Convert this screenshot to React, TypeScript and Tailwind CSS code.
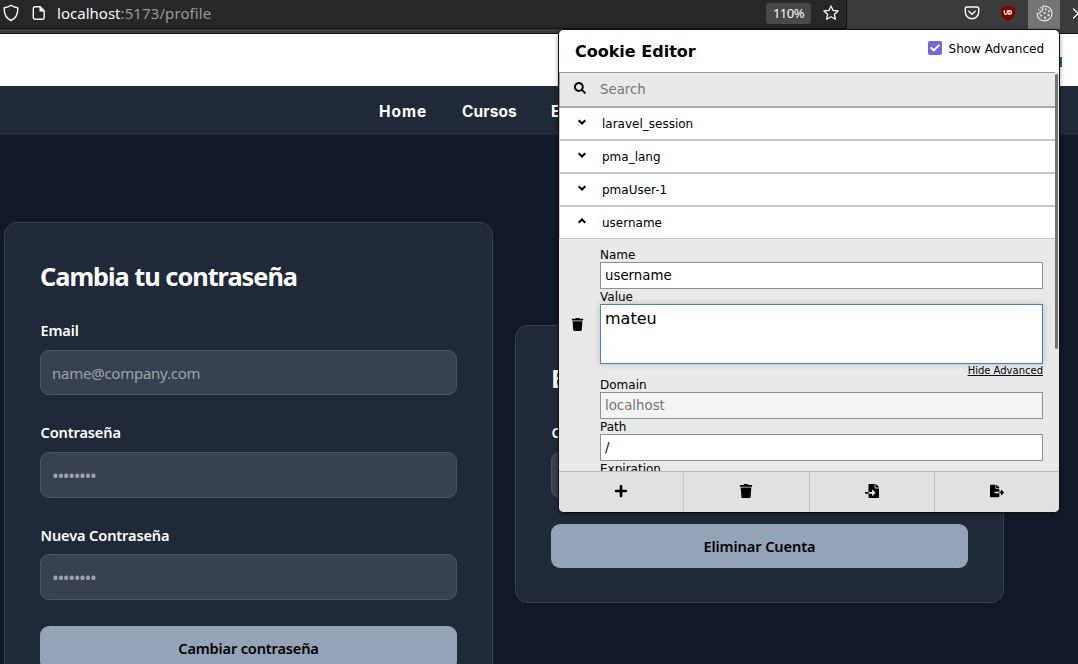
import React from "react";
import { FaPlus, FaTrash, FaFileImport, FaFileExport, FaSearch, FaCheck } from "react-icons/fa";

const cookies = [
  { name: "laravel_session", open: false },
  { name: "pma_lang", open: false },
  { name: "pmaUser-1", open: false },
  { name: "username", open: true },
];

function ShieldIcon() {
  return (
    <svg width="16" height="18" viewBox="0 0 16 18" fill="none" stroke="#fbfbfe" strokeWidth="1.4" strokeLinejoin="round">
      <path d="M8 1.2 C6 2.6 3.8 3.4 1.3 3.8 C.9 9 2.6 14 8 16.5 C13.400 14 15.100 9 14.700 3.800 C12.200 3.400 10 2.600 8 1.200Z" />
    </svg>
  );
}

function PageIcon() {
  return (
    <svg width="14" height="16" viewBox="0 0 14 16">
      <path d="M3 1.700h5.200l4 4V12.500a1.700 1.700 0 0 1-1.700 1.700H3a1.700 1.700 0 0 1-1.700-1.700V3.400A1.700 1.700 0 0 1 3 1.700Z" fill="none" stroke="#fbfbfe" strokeWidth="1.400" />
      <path d="M7.500 1.300v5.200h5z" fill="#fbfbfe" />
    </svg>
  );
}

function StarIcon() {
  return (
    <svg width="16" height="16" viewBox="0 0 16 16" fill="none" stroke="#fbfbfe" strokeWidth="1.300" strokeLinejoin="round">
      <path d="M8 .9l2.100 4.500 5 .6-3.700 3.300 1 4.900L8 11.800l-4.400 2.400 1-4.900L.9 6l5-.6z" />
    </svg>
  );
}

function PocketIcon() {
  return (
    <svg width="16" height="16" viewBox="0 0 16 16" fill="none" stroke="#fbfbfe" strokeWidth="1.400" strokeLinecap="round" strokeLinejoin="round">
      <path d="M2.800 2h10.400a1.500 1.500 0 0 1 1.500 1.500V7A6.700 6.700 0 0 1 1.300 7V3.500A1.500 1.500 0 0 1 2.800 2Z" />
      <path d="M4.800 6.200L8 9.200l3.200-3" />
    </svg>
  );
}

function UblockIcon() {
  return (
    <svg width="16" height="16" viewBox="0 0 16 16">
      <path d="M8 .2C6 1.600 3.600 2.200 1 2.200V7.500c0 4 3 6.600 7 8.300 4-1.700 7-4.300 7-8.300V2.200C12.400 2.200 10 1.600 8 .2Z" fill="#800000" />
      <path d="M4.300 5.300v2.500a1.500 1.500 0 0 0 3 0V5.300" fill="none" stroke="#fff" strokeWidth="1.200" />
      <path d="M8.800 5.700h1a1.700 1.700 0 0 1 0 3.400h-1z" fill="none" stroke="#fff" strokeWidth="1.200" />
    </svg>
  );
}

function CookieIcon() {
  return (
    <svg width="17" height="17" viewBox="0 0 17 17">
      <path d="M6.800 1.200C14 .2 16.300 5.500 15.800 9A7.300 7.300 0 0 1 1.200 8.300C3 9 4.500 7.800 4.300 6.300 6.500 6.300 7.200 4.500 6.400 3.400 6.900 2.700 7 2 6.800 1.200Z" fill="none" stroke="#e6e6e8" strokeWidth="1.200" strokeLinejoin="round" />
      <g fill="#e6e6e8">
        <circle cx="9.800" cy="4.300" r="1" />
        <circle cx="12.900" cy="6.200" r="1" />
        <circle cx="8.700" cy="8" r="1.100" />
        <circle cx="12.500" cy="10.200" r="1.100" />
        <circle cx="5.200" cy="10.600" r="1.100" />
        <circle cx="9" cy="12.700" r="1.100" />
        <circle cx="2.600" cy="4.800" r=".8" />
        <circle cx="4.500" cy="2.800" r=".8" />
      </g>
    </svg>
  );
}

function Chevron({ up }: { up: boolean }) {
  return (
    <svg className="mb-[3px]" width="8" height="6" viewBox="0 0 8 6" fill="none" stroke="#000" strokeWidth="2">
      <path d={up ? "M.7 4.700L4 1.500l3.300 3.200" : "M.7 1.300L4 4.500l3.300-3.200"} />
    </svg>
  );
}

function BrowserBar() {
  return (
    <header className="flex h-[34px] shrink-0 flex-col border-b border-[#111] bg-[#3b3b3b]">
      <div className="flex h-[29px]">
        <div className="flex w-[847px] items-start rounded-br-[3px] border-b border-r border-[#151515] bg-[#272727] pl-[3px] font-['Noto_Sans',sans-serif]">
          <div className="mt-[4px]"><ShieldIcon /></div>
          <div className="ml-[13px] mt-[5px]"><PageIcon /></div>
          <div className="ml-[11px] mt-[3px] w-[160px] whitespace-nowrap text-[15px] leading-[21px] tracking-[0.02px] text-[#f9f9fa]">
            localhost<span className="tracking-[0.1px] text-[#999]">:5173/profile</span>
          </div>
          <div className="ml-auto mt-[3px] h-[21px] w-[45px] rounded-[3px] bg-[#484848] text-center text-[13px] leading-[21px] tracking-[-0.5px] text-[#fbfbfe]">110%</div>
          <div className="ml-[12px] mr-[7px] mt-[5px]"><StarIcon /></div>
        </div>
        <div className="flex flex-1 overflow-hidden">
          <div className="ml-[117px] mt-[5px]"><PocketIcon /></div>
          <div className="ml-[20px] mt-[5px]"><UblockIcon /></div>
          <div className="ml-[12px] flex h-full w-[32px] shrink-0 justify-center bg-[#757575] pt-[5px]"><CookieIcon /></div>
          <svg className="ml-[13px] mt-[8px] shrink-0" width="12" height="12" viewBox="0 0 12 12" fill="none" stroke="#fbfbfe" strokeWidth="1.300">
            <path d="M0 .5l5.500 5L0 10.500" />
          </svg>
        </div>
      </div>
    </header>
  );
}

function Field({ label, placeholder, className, labelClassName = "leading-[20px]", inputClassName }: { label: string; placeholder: string; className: string; labelClassName?: string; inputClassName: string }) {
  return (
    <label className={`block ${className}`}>
      <span className={`block h-[22px] whitespace-nowrap pl-[0.5px] text-[14.6px] font-semibold tracking-[-0.14px] text-white ${labelClassName}`}>{label}</span>
      <span className={`mt-[8px] flex items-center rounded-[9px] border border-[#4b5563] bg-[#374151] pl-[11px] text-[#9ca3af] ${inputClassName}`}>{placeholder}</span>
    </label>
  );
}

const bullets = "••••••••";

function Profile() {
  return (
    <main className="flex flex-1 items-start gap-[22px] bg-[#111827] pl-[4px] pt-[87px] font-['Noto_Sans',sans-serif]">
      <section className="h-[500px] w-[489px] shrink-0 rounded-[13px] border border-[#374151] bg-[#1f2937] px-[35px] pt-[36px]">
        <h1 className="h-[36px] whitespace-nowrap text-[25.3px] font-bold leading-[35px] tracking-[-1px] text-white">Cambia tu contraseña</h1>
        <Field className="mt-[25px]" inputClassName="h-[45px] pt-[1px] text-[15px] tracking-[-0.25px]" label="Email" placeholder="name@company.com" />
        <Field className="mt-[27px]" inputClassName="h-[46px] pt-[1px] text-[18px] tracking-[-1.35px]" label="Contraseña" placeholder={bullets} />
        <Field className="mt-[26px]" labelClassName="leading-[22px]" inputClassName="h-[46px] pt-[1px] text-[18px] tracking-[-1.35px]" label="Nueva Contraseña" placeholder={bullets} />
        <button className="mt-[26px] block h-[44px] w-full rounded-[9px] bg-[#94a3b8] pt-[2px] text-[14.6px] font-semibold tracking-[-0.17px] text-black">Cambiar contraseña</button>
      </section>
      <section className="mt-[103px] h-[278px] w-[489px] shrink-0 rounded-[13px] border border-[#374151] bg-[#1f2937] px-[35px] pt-[36px]">
        <h1 className="h-[36px] text-[25px] font-bold leading-[33px] text-white">Eliminar</h1>
        <Field className="mt-[24px]" inputClassName="h-[46px] pt-[1px] text-[18px] tracking-[-1.35px]" label="Contraseña" placeholder={bullets} />
        <button className="mt-[26px] block h-[44px] w-full rounded-[9px] bg-[#94a3b8] pt-[2px] text-[14.6px] font-semibold tracking-[-0.1px] text-black">Eliminar Cuenta</button>
      </section>
    </main>
  );
}

function CookieField({ label, value, disabled }: { label: string; value: string; disabled?: boolean }) {
  return (
    <div className="h-[42px]">
      <div className="h-[15px] text-[12px] leading-[17px]">{label}</div>
      <div className={`h-[27px] border border-[#8f8f8f] pl-[4px] text-[13.33px] leading-[25px] ${disabled ? "bg-[#f4f4f4] text-[#757575]" : "bg-white"}`}>{value}</div>
    </div>
  );
}

function CookieEditor() {
  return (
    <aside className="absolute left-[558px] top-[29px] flex h-[484px] w-[502px] flex-col overflow-hidden rounded-[6px] border border-[#111] bg-[#e9e9e9] font-['DejaVu_Sans',sans-serif] text-black shadow-[0_1px_4px_rgba(0,0,0,0.4)]">
      <div className="flex h-[42px] shrink-0 bg-white pl-[16px] pr-[15px]">
        <h2 className="whitespace-nowrap text-[16px] font-bold leading-[44px]">Cookie Editor</h2>
        <div className="ml-auto flex h-[36px] items-center gap-[6px]">
          <span className="mr-[1px] flex size-[14px] items-center justify-center rounded-[2px] bg-[#7764d8] text-white"><FaCheck size={10} /></span>
          <span className="pt-[2px] text-[12px]">Show Advanced</span>
        </div>
      </div>
      <div className="flex min-h-0 flex-1">
        <div className="min-w-0 flex-1">
          <div className="flex h-[36px] items-center border-l border-t border-b-2 border-[#999] border-b-[#aaa] pl-[14px]">
            <FaSearch size={12} className="mb-[3px]" />
            <span className="ml-[14px] text-[13.33px] text-[#757575]">Search</span>
          </div>
          {cookies.map((c) => (
            <div key={c.name} className={`flex items-center border-l border-[#c8c8c8] bg-white pl-[18px] ${c.open ? "h-[32px] border-b" : "h-[33px] border-b-2"}`}>
              <Chevron up={c.open} />
              <span className="ml-[16px] text-[12px]">{c.name}</span>
            </div>
          ))}
          <div className="flex h-[232px] overflow-hidden">
            <div className="flex w-[41px] shrink-0 justify-center pr-[4px] pt-[79px]"><FaTrash size={13} /></div>
            <div className="w-[443px] pt-[8px]">
              <CookieField label="Name" value="username" />
              <div className="h-[15px] text-[12px] leading-[17px]">Value</div>
              <div className="h-[60px] border border-[#4a80c0] bg-white pl-[4px] text-[16px] leading-[27px] shadow-[0_0_6px_rgba(0,0,0,0.2)]">mateu</div>
              <div className="h-[13px] text-right text-[10px] leading-[13px] underline">Hide Advanced</div>
              <CookieField label="Domain" value="localhost" disabled />
              <CookieField label="Path" value="/" />
              <div className="text-[12px] leading-[17px]">Expiration</div>
            </div>
          </div>
        </div>
        <div className="w-[4px] shrink-0 pt-[2px]"><div className="h-[275px] w-[3px] rounded-full bg-[#737373]" /></div>
      </div>
      <div className="grid h-[41px] shrink-0 grid-cols-[125px_126px_125px_124px] border-t border-[#b7b7b7] bg-[#e1e1e1] pb-[1px]">
        <span className="-mb-px flex items-center justify-center border-r border-[#c5c5c5] pb-[2px]"><FaPlus size={14} /></span>
        <span className="-mb-px flex items-center justify-center border-r border-[#c5c5c5] pb-[2px] pr-[1px]"><FaTrash size={14} /></span>
        <span className="-mb-px flex items-center justify-center border-r border-[#c5c5c5] pb-[2px]"><FaFileImport size={14} /></span>
        <span className="-mb-px flex items-center justify-center pb-[2px]"><FaFileExport size={14} /></span>
      </div>
    </aside>
  );
}

export default function App() {
  return (
    <div className="relative flex h-[664px] w-[1078px] flex-col overflow-hidden bg-[#111827]">
      <BrowserBar />
      <div className="flex h-[52px] shrink-0 justify-end bg-white pr-[16px] pt-[23px]"><span className="h-[10px] w-[2px] bg-[#285f9f]" /></div>
      <nav className="flex h-[49px] shrink-0 items-center bg-[#1f2937] pl-[379px] pt-[2px] font-['Inter',sans-serif] text-[15.4px] font-bold text-white">
        <span className="w-[83px] tracking-[1px]">Home</span>
        <span className="w-[89px] tracking-[0.15px]">Cursos</span>
        <span>Entrenamientos</span>
      </nav>
      <Profile />
      <CookieEditor />
    </div>
  );
}
